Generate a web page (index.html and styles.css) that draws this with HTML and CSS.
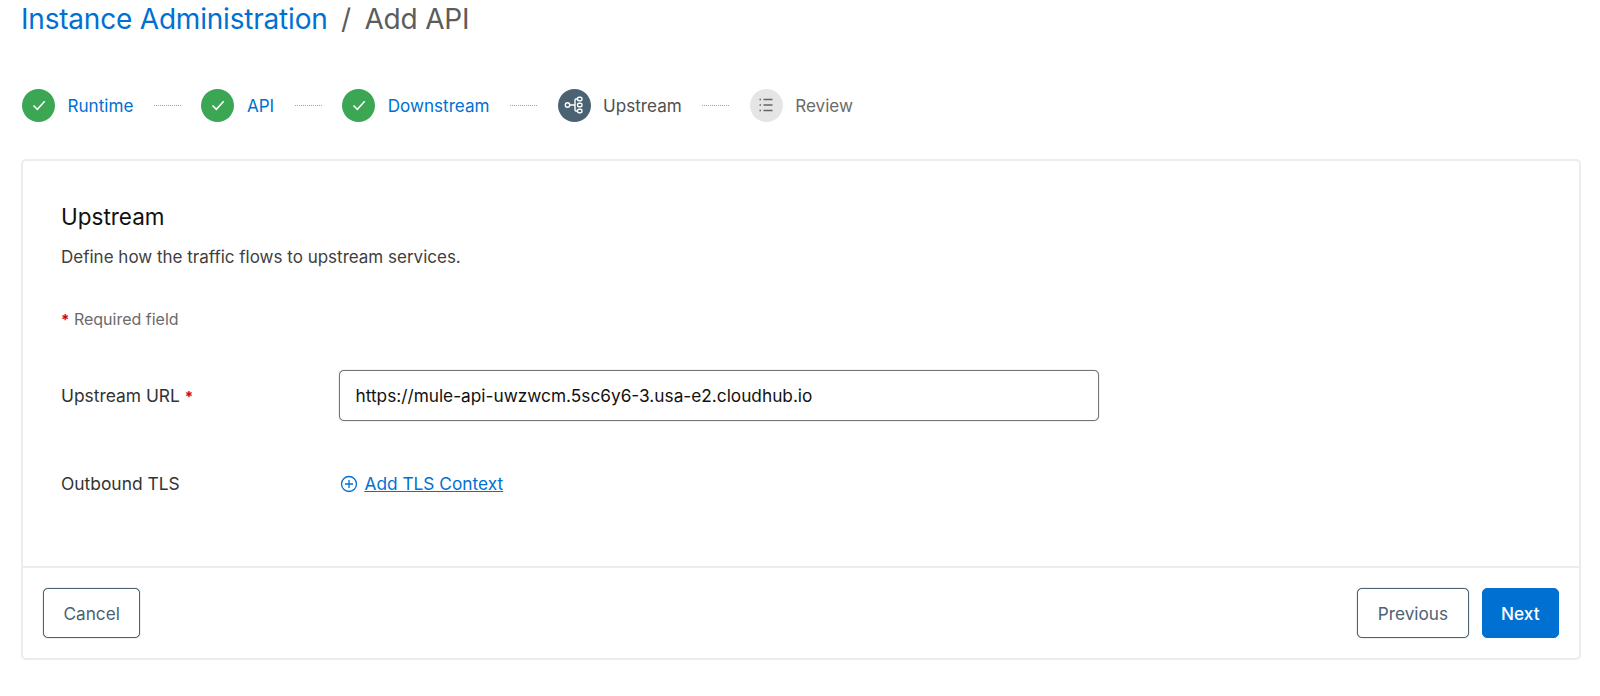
FILE: index.html
```html
<!DOCTYPE html>
<html lang="en">
<head>
<meta charset="utf-8">
<title>Add API</title>
<link rel="stylesheet" href="styles.css">
</head>
<body>
<main class="page">
  <h1 class="crumbs"><a class="crumb-link" href="#">Instance Administration</a><span class="crumb-sep">/</span><span class="crumb-current">Add API</span></h1>
  <ol class="steps">
    <li class="step done">
      <span class="badge"><svg viewBox="0 0 32 32" width="32" height="32"><path d="M10.5 16.5l3.8 3.8 7.4-8" fill="none" stroke="#fff" stroke-width="1.5"/></svg></span>
      <a href="#" class="step-label">Runtime</a>
    </li>
    <li class="dots"></li>
    <li class="step done">
      <span class="badge"><svg viewBox="0 0 32 32" width="32" height="32"><path d="M10.5 16.5l3.8 3.8 7.4-8" fill="none" stroke="#fff" stroke-width="1.5"/></svg></span>
      <a href="#" class="step-label">API</a>
    </li>
    <li class="dots"></li>
    <li class="step done">
      <span class="badge"><svg viewBox="0 0 32 32" width="32" height="32"><path d="M10.5 16.5l3.8 3.8 7.4-8" fill="none" stroke="#fff" stroke-width="1.5"/></svg></span>
      <a href="#" class="step-label">Downstream</a>
    </li>
    <li class="dots"></li>
    <li class="step current">
      <span class="badge"><svg viewBox="0 0 32 32" width="32" height="32" fill="none" stroke="#fff" stroke-width="1.4"><circle cx="9.500" cy="16" r="2.200"/><path d="M11.700 16h5.300M17 16v-5a1 1 0 0 1 1-1h1.500M17 16v5a1 1 0 0 0 1 1h1.500"/><rect x="19.500" y="8.300" width="4.500" height="3.400" rx="1.500"/><rect x="19.500" y="14.300" width="4.500" height="3.400" rx="1.500"/><rect x="19.500" y="20.300" width="4.500" height="3.400" rx="1.500"/></svg></span>
      <span class="step-label">Upstream</span>
    </li>
    <li class="dots"></li>
    <li class="step todo">
      <span class="badge"><svg viewBox="0 0 32 32" width="32" height="32" fill="none" stroke="#666" stroke-width="1.3"><path d="M9.500 10.500h1.500M9.500 16h1.500M9.500 21.500h1.500M13.500 10.500h9M13.500 16h9M13.500 21.500h9"/></svg></span>
      <span class="step-label">Review</span>
    </li>
  </ol>
  <section class="card">
    <div class="card-body">
      <h2 class="card-title">Upstream</h2>
      <p class="card-desc">Define how the traffic flows to upstream services.</p>
      <p class="required-note"><span class="star">*</span> Required field</p>
      <div class="field url-field">
        <label class="field-label" for="url">Upstream URL <span class="star">*</span></label>
        <input class="text-input" id="url" type="text" value="https://mule-api-uwzwcm.5sc6y6-3.usa-e2.cloudhub.io">
      </div>
      <div class="field tls-field">
        <span class="field-label">Outbound TLS</span>
        <a class="add-link" href="#"><svg viewBox="0 0 18 18" width="18" height="18" fill="none" stroke="#0070d2" stroke-width="1.300"><circle cx="9" cy="9" r="7.500"/><path d="M9 5v8M5 9h8"/></svg><span class="add-text">Add TLS Context</span></a>
      </div>
    </div>
    <footer class="card-foot">
      <button class="btn" type="button">Cancel</button>
      <div class="foot-right">
        <button class="btn" type="button">Previous</button>
        <button class="btn primary" type="button">Next</button>
      </div>
    </footer>
  </section>
</main>
</body>
</html>
```

FILE: styles.css
```css
* { box-sizing: border-box; }
html, body { margin: 0; padding: 0; background: #fff; }
body { font-family: Inter, "Liberation Sans", sans-serif; color: #2b2b2b; height: 696px; overflow: hidden; }
.page { padding: 0 19px 0 21px; }
.crumbs { margin: 0; height: 38px; display: flex; align-items: center; font-size: 28px; font-weight: 400; letter-spacing: -0.2px; line-height: 38px; }
.crumb-link { color: #0070d2; text-decoration: none; }
.crumb-sep { color: #5c5c5c; margin: 0 13.500px; }
.crumb-current { color: #5c5c5c; }
.steps { list-style: none; margin: 50px 0 0; padding: 0 0 0 1px; display: flex; align-items: center; height: 34px; }
.step { display: flex; align-items: center; gap: 12.500px; }
.badge { width: 33px; height: 33px; border-radius: 50%; display: flex; align-items: center; justify-content: center; flex: none; }
.done .badge { background: #3ba755; }
.current .badge { background: #4a6272; }
.todo .badge { background: #e5e5e5; }
.step-label { font-size: 17.100px; text-decoration: none; }
.done .step-label { color: #0070d2; }
.current .step-label { color: #4f4f4f; }
.todo .step-label { color: #6b6b6b; }
.dots { width: 27px; height: 0; margin: 0 20.500px; border-top: 1px dotted #a0a0a0; }
.card { margin-top: 37px; width: 1560px; height: 501px; border: 2px solid #ececec; border-radius: 5px; display: flex; flex-direction: column; }
.card-body { flex: 1; padding: 42px 38px 0; }
.card-title { margin: 0; font-size: 22.500px; line-height: 28px; font-weight: 400; color: #111; }
.card-desc { margin: 15px 0 0; font-size: 17px; line-height: 22px; color: #3e3e3e; }
.required-note { margin: 41px 0 0; font-size: 16px; line-height: 20px; color: #6b6b6b; }
.star { color: #d0021b; font-weight: 700; font-size: 15px; }
.field { display: flex; align-items: center; }
.field-label { width: 277.500px; flex: none; font-size: 17.400px; color: #333; }
.url-field { margin-top: 40px; }
.text-input { width: 760px; height: 51px; padding: 0 16px; border: 1px solid #747474; border-radius: 5px; box-shadow: 0 0 1px #777; font: inherit; font-size: 17.250px; color: #111; background: #fff; outline: none; }
.tls-field { margin-top: 52px; }
.add-link { display: flex; align-items: center; gap: 7px; margin-left: 1px; color: #0070d2; font-size: 17.300px; }
.add-text { text-decoration: underline; }
.card-foot { flex: none; height: 92px; border-top: 2px solid #ececec; padding: 20px 20px 0; display: flex; justify-content: space-between; align-items: flex-start; }
.foot-right { display: flex; gap: 13px; }
.btn { height: 50px; padding: 0 19.500px; border: 1px solid #4a6272; border-radius: 5px; box-shadow: 0 0 1px #4a6272; background: #fff; color: #4a6272; font: inherit; font-size: 17.200px; font-weight: 400; }
.btn.primary { padding: 0 18.500px; background: #0070d2; border-color: #0070d2; box-shadow: none; color: #fff; font-weight: 500; }
```
